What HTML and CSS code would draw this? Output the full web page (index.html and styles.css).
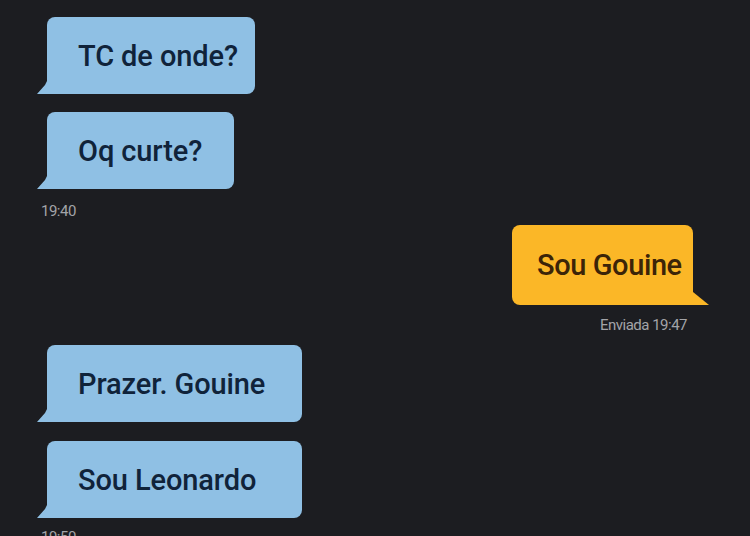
FILE: index.html
```html
<!DOCTYPE html>
<html lang="pt">
<head>
<meta charset="utf-8">
<title>Chat</title>
<link rel="stylesheet" href="styles.css">
</head>
<body>
<main class="chat">
  <div class="bubble in w1">TC de onde?</div>
  <div class="bubble in w2 gap">Oq curte?</div>
  <div class="stamp in-stamp">19:40</div>
  <div class="bubble out">Sou Gouine</div>
  <div class="stamp out-stamp">Enviada 19:47</div>
  <div class="bubble in w3 after-stamp">Prazer. Gouine</div>
  <div class="bubble in w3 gap-wide">Sou Leonardo</div>
  <div class="stamp in-stamp last">19:50</div>
</main>
</body>
</html>
```

FILE: styles.css
```css
html, body {
  margin: 0;
  padding: 0;
  background: #1c1d21;
  height: 100%;
  overflow: hidden;
}

.chat {
  display: flex;
  flex-direction: column;
  padding-top: 17px;
  font-family: Roboto, "Liberation Sans", sans-serif;
}

.bubble {
  position: relative;
  box-sizing: border-box;
  height: 77px;
  display: flex;
  align-items: center;
  font-size: 29px;
  font-weight: 500;
  letter-spacing: -0.1px;
  white-space: nowrap;
}

.bubble.in {
  align-self: flex-start;
  margin-left: 47px;
  padding-left: 31px;
  background: #8fc0e4;
  color: #10233a;
  border-radius: 8px 8px 8px 0;
}

.bubble.in::before {
  content: "";
  position: absolute;
  left: -10px;
  bottom: 0;
  width: 10px;
  height: 13px;
  background: #8fc0e4;
  clip-path: polygon(100% 0, 80% 30%, 0 100%, 100% 100%);
}

.w1 { width: 208px; }
.w2 { width: 187px; }
.w3 { width: 255px; }

.gap { margin-top: 18px; }
.gap-wide { margin-top: 19px; }
.after-stamp { margin-top: 11px; }

.bubble.out {
  align-self: flex-end;
  margin-right: 57px;
  margin-top: 5px;
  width: 181px;
  height: 80px;
  padding-left: 25px;
  letter-spacing: -0.4px;
  background: #fbb727;
  color: #3b2408;
  border-radius: 8px 8px 0 8px;
}

.bubble.out::after {
  content: "";
  position: absolute;
  right: -16px;
  bottom: 0;
  width: 16px;
  height: 13px;
  background: #fbb727;
  clip-path: polygon(0 0, 100% 100%, 0 100%);
}

.stamp {
  font-size: 15px;
  line-height: 18px;
  color: #a3a4a8;
  letter-spacing: -0.5px;
}

.in-stamp {
  align-self: flex-start;
  margin-left: 41px;
  margin-top: 13px;
}

.out-stamp {
  align-self: flex-end;
  margin-right: 63px;
  margin-top: 11px;
}

.last { margin-top: 10px; }
```
